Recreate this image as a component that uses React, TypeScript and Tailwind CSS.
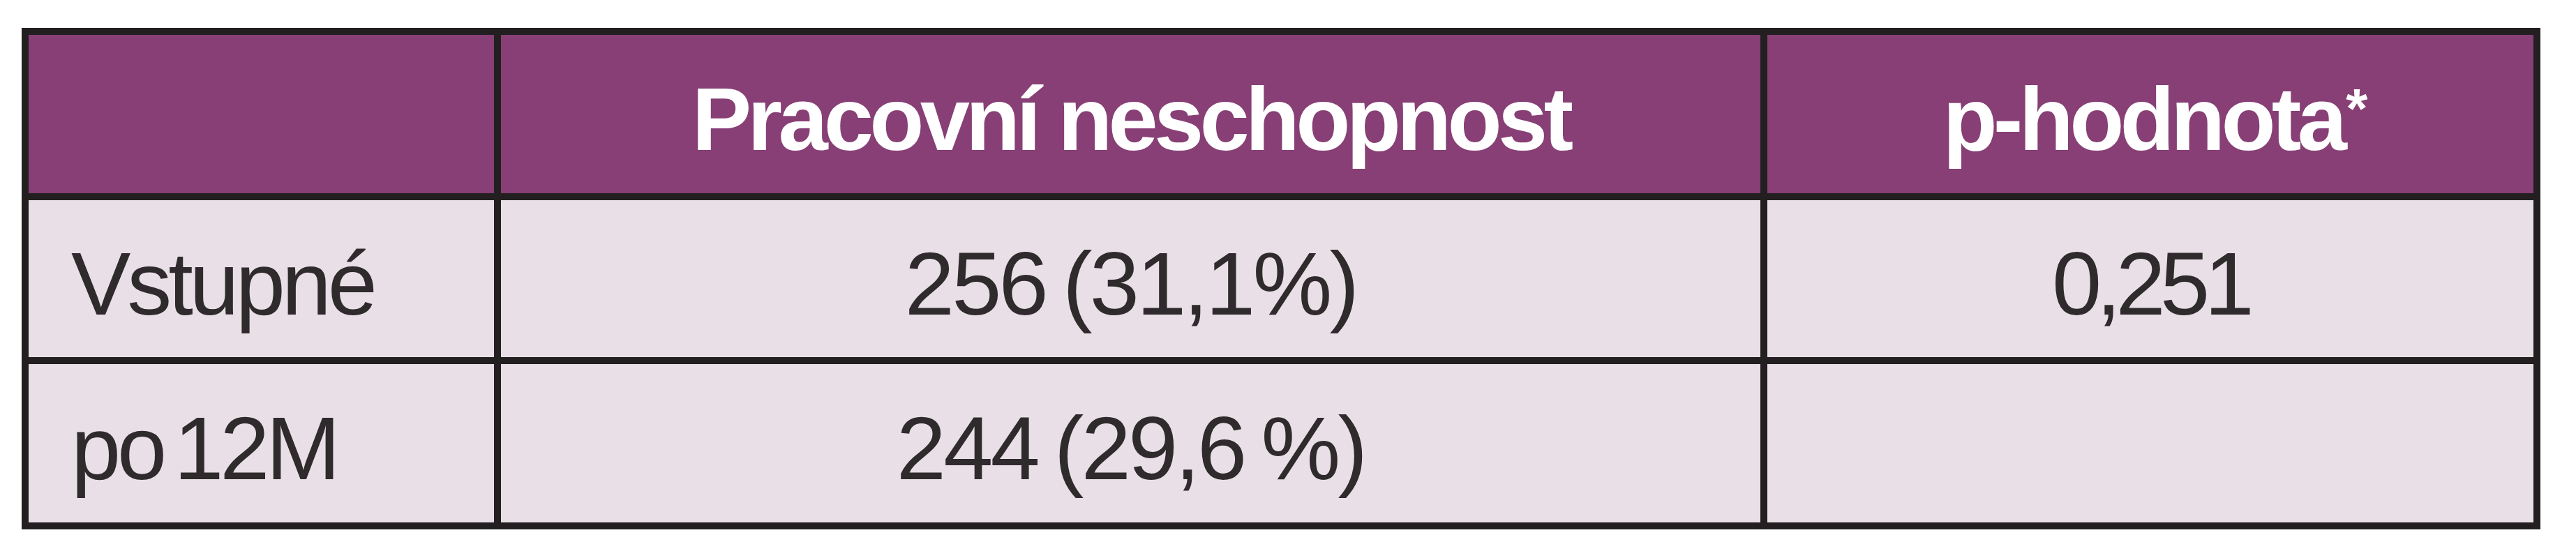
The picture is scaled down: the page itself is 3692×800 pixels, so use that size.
const ROWS = [
  { label: 'Vstupné', value: '256 (31,1%)', p: '0,251' },
  { label: 'po 12M', value: '244 (29,6 %)', p: '' },
];

const cell = 'flex items-center pt-[14px] bg-[#e9dfe7] text-[#2f2a2c]';

export default function App() {
  return (
    <div className="bg-white w-[3692px] h-[800px] pt-[40px] pl-[31px] font-['Liberation_Sans',Arial,sans-serif]">
      <div className="inline-grid grid-cols-[667px_1805px_1098px] grid-rows-[227px_225px_227px] gap-[10px] p-[10px] bg-[#231f20] text-[128px] leading-none">
        {/* header */}
        <div className="bg-[#873f75]" />
        <div className="flex items-center justify-center pt-[14px] bg-[#873f75] text-white font-bold tracking-[-0.045em]">
          Pracovní neschopnost
        </div>
        <div className="flex items-center justify-center pt-[14px] pl-[8px] bg-[#873f75] text-white font-bold tracking-[-0.045em]">
          p-hodnota<span className="self-start mt-[52px] ml-[4px] text-[80px]">*</span>
        </div>

        {ROWS.map(r => (
          <div key={r.label} className="contents">
            <div className={`${cell} pl-[61px] tracking-[-0.04em] [word-spacing:-0.12em]`}>{r.label}</div>
            <div className={`${cell} justify-center tracking-[-0.03em] [word-spacing:-0.06em]`}>{r.value}</div>
            <div className={`${cell} justify-center tracking-[-0.06em]`}>{r.p}</div>
          </div>
        ))}
      </div>
    </div>
  );
}
